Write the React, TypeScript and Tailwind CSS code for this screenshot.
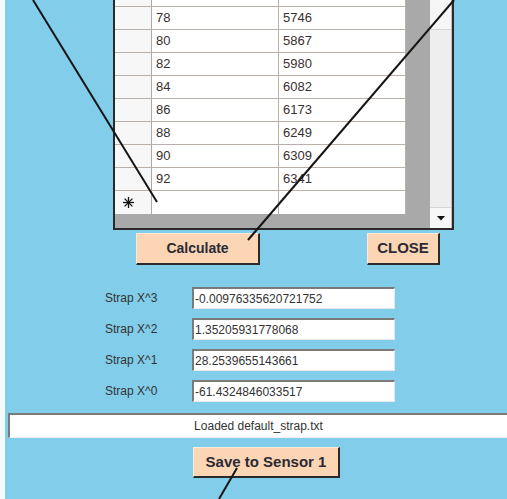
import React from "react";

const rows: [string, string][] = [
  ["78", "5746"],
  ["80", "5867"],
  ["82", "5980"],
  ["84", "6082"],
  ["86", "6173"],
  ["88", "6249"],
  ["90", "6309"],
  ["92", "6341"],
];

const fields: [string, string][] = [
  ["Strap X^3", "-0.00976335620721752"],
  ["Strap X^2", "1.35205931778068"],
  ["Strap X^1", "28.2539655143661"],
  ["Strap X^0", "-61.4324846033517"],
];

function Btn({ label, cls }: { label: string; cls: string }) {
  return (
    <div
      className={
        "flex items-center justify-center bg-[#fcd5b4] border-t border-l border-t-[#fde9d8] border-l-[#fde9d8] border-r-2 border-b-2 border-r-[#2a2a2a] border-b-[#2a2a2a] font-bold text-[#2a2a35] " +
        cls
      }
    >
      {label}
    </div>
  );
}

export default function App() {
  return (
    <div
      className="relative w-[507px] h-[499px] overflow-hidden bg-[#82cdea] flex"
      style={{ fontFamily: '"Liberation Sans", Arial, sans-serif' }}
    >
      <div className="w-[5px] h-full bg-[#f4f9fc]" />
      <div className="flex-1 flex flex-col">
        {/* Grid */}
        <div className="ml-[108px] w-[341px] h-[230px] flex bg-[#a9a9a9] border-l-2 border-b-2 border-r-2 border-[#2a2a2a]">
          <div className="w-[291px] flex flex-col">
            <div className="flex h-[7px] border-b border-[#b9b0aa]">
              <div className="w-[37px] bg-[#f7f7f7] border-r border-[#a9a9a9]" />
              <div className="w-[127px] bg-white border-r border-[#b9b0aa]" />
              <div className="w-[127px] bg-white border-r border-[#b9b0aa]" />
            </div>
            {rows.map(([a, b]) => (
              <div key={a} className="flex h-[23px] border-b border-[#b9b0aa] text-[13px] text-[#3a3030]">
                <div className="w-[37px] bg-[#f7f7f7] border-r border-[#a9a9a9]" />
                <div className="w-[127px] bg-white border-r border-[#b9b0aa] pl-[4px] flex items-center">{a}</div>
                <div className="w-[127px] bg-white border-r border-[#b9b0aa] pl-[4px] flex items-center">{b}</div>
              </div>
            ))}
            <div className="flex h-[23px] text-[13px] text-[#222]">
              <div className="w-[37px] bg-[#f7f7f7] border-r border-[#a9a9a9] flex items-center pl-[8px]">
                <svg width="11" height="11" viewBox="0 0 11 11">
                  <g stroke="#111" strokeWidth="1.3">
                    <line x1="5.5" y1="0" x2="5.5" y2="11" />
                    <line x1="0" y1="5.5" x2="11" y2="5.5" />
                    <line x1="1.6" y1="1.6" x2="9.4" y2="9.4" />
                    <line x1="9.4" y1="1.6" x2="1.6" y2="9.4" />
                  </g>
                </svg>
              </div>
              <div className="w-[127px] bg-white border-r border-[#b9b0aa]" />
              <div className="w-[127px] bg-white border-r border-[#b9b0aa]" />
            </div>
          </div>
          <div className="w-[24px]" />
          <div className="w-[22px] bg-[#eeeeee] border-r border-[#bdbdbd] flex flex-col">
            <div className="h-[30px] bg-[#f6f6f6] border-b border-[#d6d6d6]" />
            <div className="flex-1" />
            <div className="h-[21px] bg-[#f7f7f7] border-t border-[#d6d6d6] flex items-center justify-center">
              <svg width="8" height="5" viewBox="0 0 8 5">
                <path d="M0 0 L8 0 L4 4.5 Z" fill="#111" />
              </svg>
            </div>
          </div>
        </div>

        {/* Buttons */}
        <div className="flex mt-[3px]">
          <Btn label="Calculate" cls="ml-[131px] w-[124px] h-[32px] text-[14px]" />
          <Btn label="CLOSE" cls="ml-[107px] w-[73px] h-[32px] text-[15px]" />
        </div>

        {/* Fields */}
        <div className="flex flex-col gap-[9px] mt-[22px]">
          {fields.map(([l, v]) => (
            <div key={l} className="flex items-center h-[22px]">
              <div className="ml-[100px] w-[87px] text-[12px] text-[#333]">{l}</div>
              <div className="w-[203px] h-[22px] bg-white border-t-2 border-l-2 border-t-[#7a7a7a] border-l-[#7a7a7a] border-b border-r border-b-[#e8e8e8] border-r-[#e8e8e8] flex items-center pl-[1px] text-[12px] text-[#333]">
                {v}
              </div>
            </div>
          ))}
        </div>

        {/* Status */}
        <div className="mt-[11px] ml-[3px] h-[25px] bg-white border-t-2 border-l-2 border-t-[#7a7a7a] border-l-[#7a7a7a] border-b border-b-[#eeeeee] flex items-center justify-center text-[12px] text-[#333]">
          Loaded default_strap.txt
        </div>

        {/* Save */}
        <div className="flex mt-[9px]">
          <Btn label="Save to Sensor 1" cls="ml-[188px] w-[147px] h-[31px] text-[15px]" />
        </div>
      </div>

      <svg className="absolute inset-0 pointer-events-none" width="507" height="499" viewBox="0 0 507 499">
        <line x1="33" y1="0" x2="157" y2="202" stroke="#151515" strokeWidth="2" />
        <line x1="454" y1="0" x2="248" y2="240" stroke="#151515" strokeWidth="2" />
        <line x1="237" y1="468" x2="219" y2="499" stroke="#151515" strokeWidth="2" />
      </svg>
    </div>
  );
}
